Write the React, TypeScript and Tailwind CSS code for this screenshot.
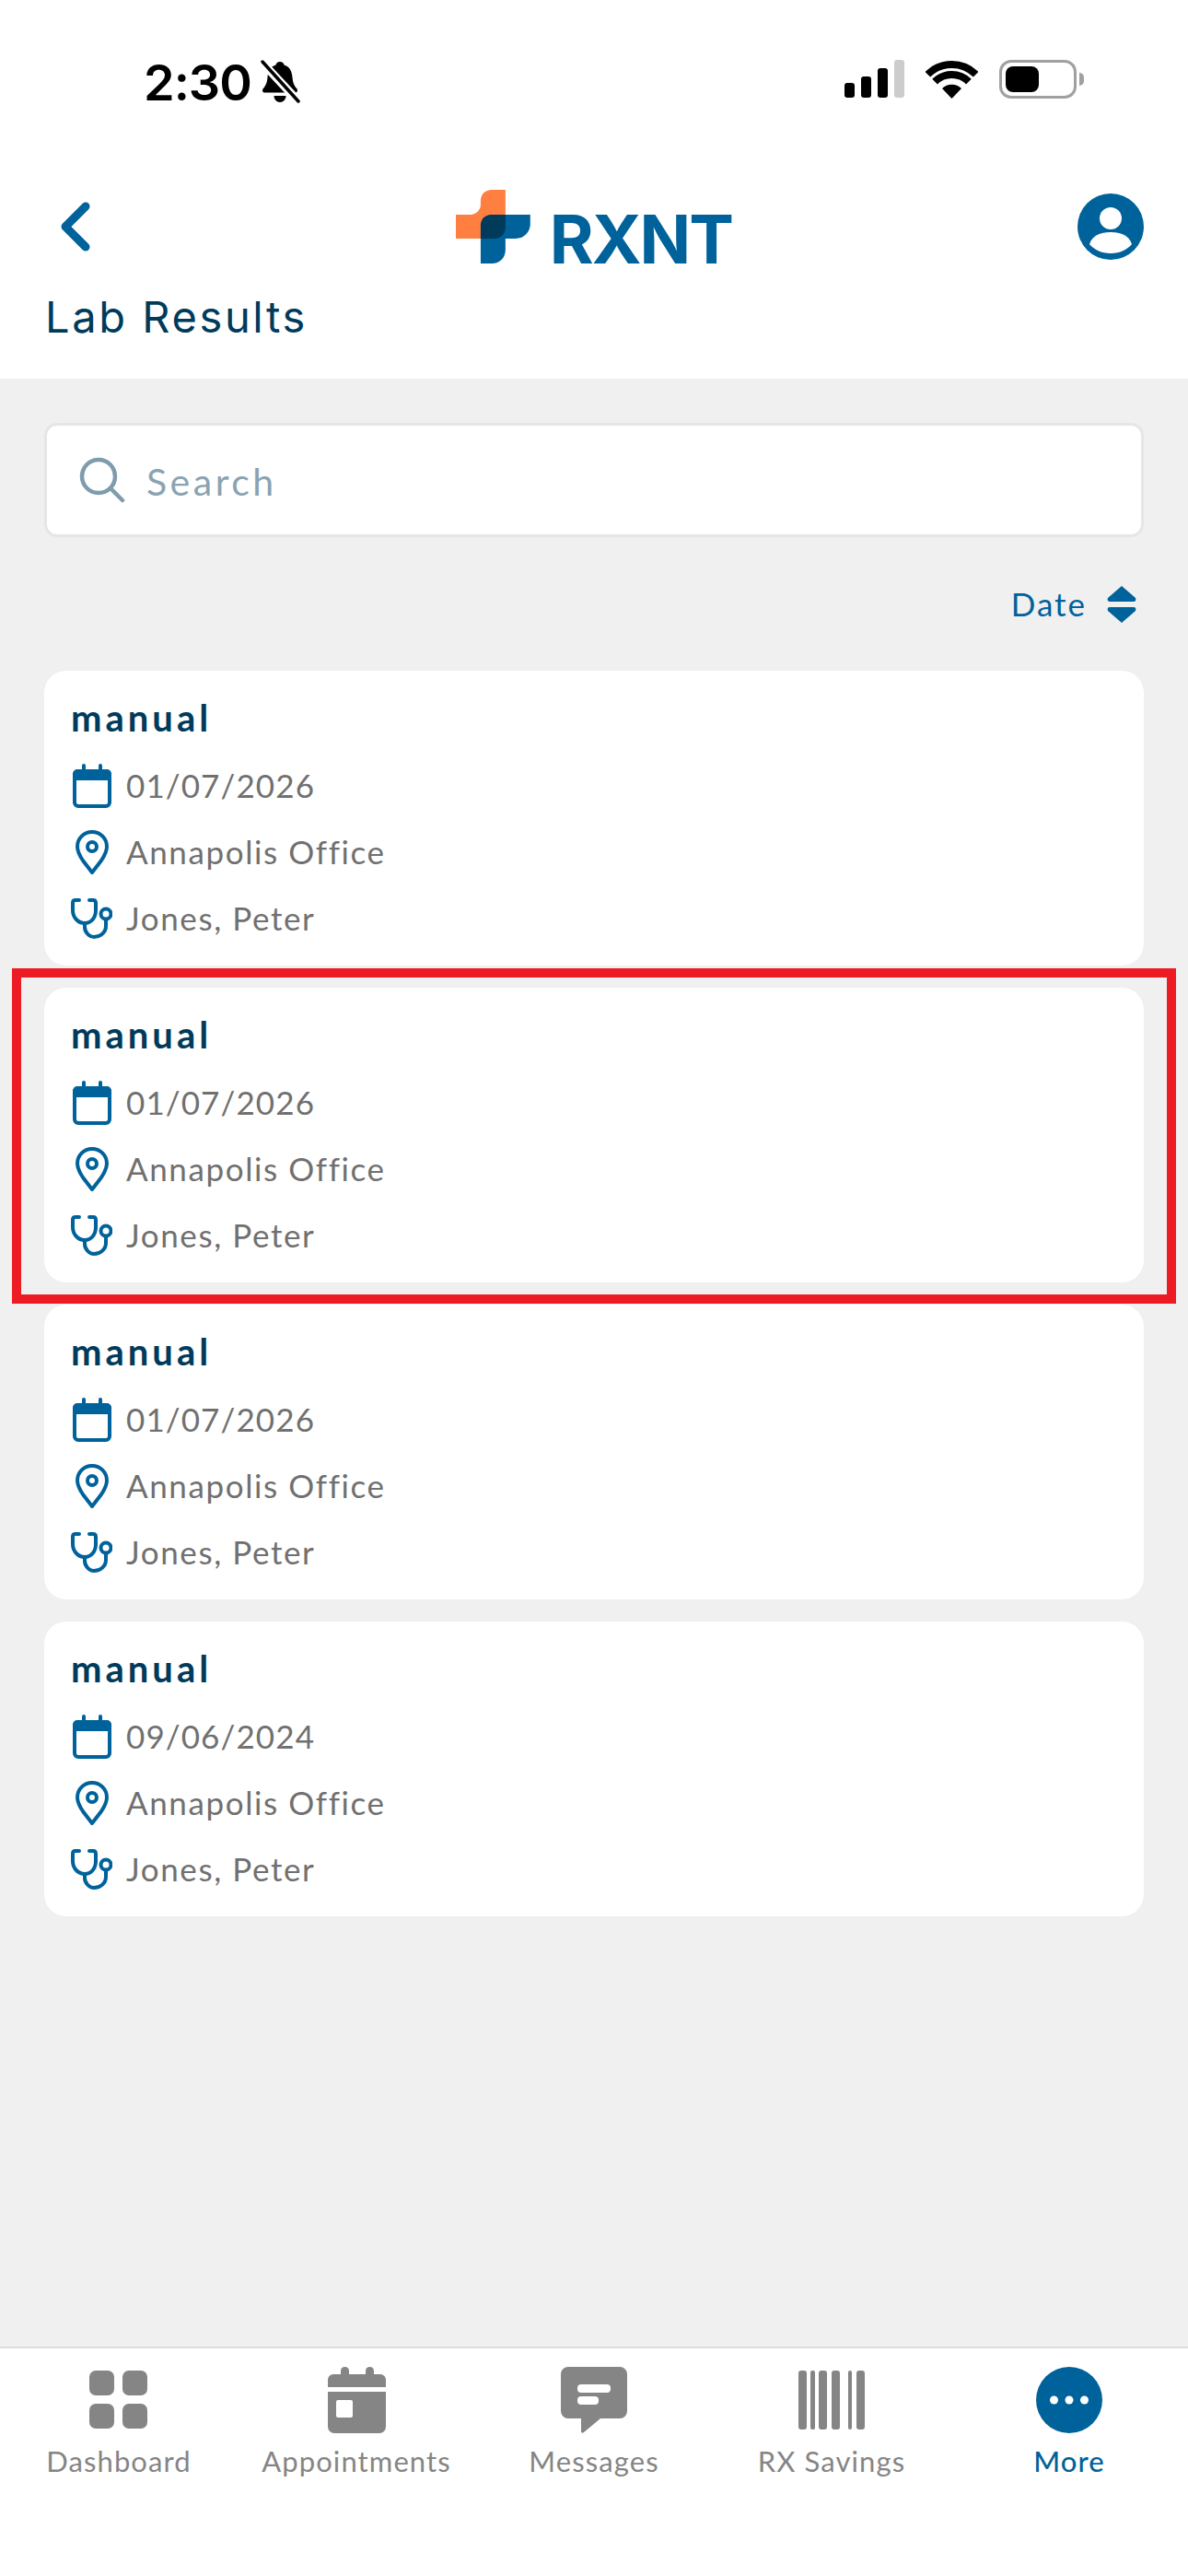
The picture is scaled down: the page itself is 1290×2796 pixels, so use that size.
const results = [
  { title: 'manual', date: '01/07/2026', office: 'Annapolis Office', doctor: 'Jones, Peter' },
  { title: 'manual', date: '01/07/2026', office: 'Annapolis Office', doctor: 'Jones, Peter' },
  { title: 'manual', date: '01/07/2026', office: 'Annapolis Office', doctor: 'Jones, Peter' },
  { title: 'manual', date: '09/06/2024', office: 'Annapolis Office', doctor: 'Jones, Peter' },
]

function BellSlash() {
  return (
    <svg width="44" height="48" viewBox="0 0 44 48" className="ml-[9px]">
      <path d="M22 2c2.500 0 4 1.500 4.500 3.500C33 7.500 35 13 35.500 19c.5 6 2 9 5 12.500 1 1.500.5 4-2 4H5.500c-2.500 0-3-2.500-2-4 3-3.500 4.500-6.500 5-12.500C9 13 11 7.500 17.500 5.500 18 3.500 19.500 2 22 2z" fill="#000" />
      <path d="M15.500 39h13c0 4-3 7-6.500 7s-6.500-3-6.500-7z" fill="#000" />
      <path d="M1 1l42 45" stroke="#fff" strokeWidth="9" />
      <path d="M3 2l39 43" stroke="#000" strokeWidth="3.500" strokeLinecap="round" />
    </svg>
  )
}

function StatusBar() {
  return (
    <div className="flex h-[206px] items-start justify-between pl-[156px] pr-[113px] pt-[65px]">
      <div className="flex items-center">
        <span className="text-[54px] leading-[47px] font-semibold text-black font-['Inter',sans-serif] tracking-[-1px]">2:30</span>
        <BellSlash />
      </div>
      <div className="flex items-start">
        <div className="flex h-[42px] items-end gap-[7px] pb-px">
          <div className="h-[16px] w-[11px] rounded-[3px] bg-black" />
          <div className="h-[23px] w-[11px] rounded-[3px] bg-black" />
          <div className="h-[32px] w-[11px] rounded-[3px] bg-black" />
          <div className="h-[41px] w-[11px] rounded-[3px] bg-[#cccccc]" />
        </div>
        <svg width="57" height="42" viewBox="0 0 57 42" className="ml-[23px]">
          <path d="M28.500 42L18 31a15 15 0 0 1 21 0z" fill="#000" />
          <path d="M10.100 23.600a26 26 0 0 1 36.800 0" fill="none" stroke="#000" strokeWidth="8" />
          <path d="M2.300 15.800a37 37 0 0 1 52.400 0" fill="none" stroke="#000" strokeWidth="8" />
        </svg>
        <div className="ml-[23px] flex items-center">
          <div className="flex h-[42px] w-[84px] items-center rounded-[13px] border-[3px] border-[#a0a0a0] p-[4px]">
            <div className="h-[28px] w-[36px] rounded-[8px] bg-black" />
          </div>
          <div className="ml-[3px] h-[14px] w-[5px] rounded-r-full bg-[#a0a0a0]" />
        </div>
      </div>
    </div>
  )
}

function Logo() {
  return (
    <div className="flex w-[300px] items-center">
      <svg width="81" height="80" viewBox="0 0 81 80">
        <path d="M0 27h16c6 0 11-5 11-11V12C27 5 32 0 39 0h15v53H0z" fill="#ff7f41" />
        <path d="M27 39c0-7 5-12 12-12h42v10c0 9-7 16-16 16H54v12c0 9-6 15-15 15H27z" fill="#00629b" />
        <path d="M27 39c0-7 5-12 12-12h15v14c0 7-5 12-12 12H27z" fill="#003b5c" />
      </svg>
      <span className="ml-[21px] self-end text-[73px] leading-[53px] font-bold text-[#00629b] font-['Inter',sans-serif] tracking-[-2px]">RXNT</span>
    </div>
  )
}

function Header() {
  return (
    <header className="h-[411px] bg-white">
      <StatusBar />
      <div className="flex h-[80px] items-center px-[48px]">
        <div className="flex flex-1">
          <svg width="32" height="54" viewBox="0 0 32 54" className="ml-[18px]">
            <path d="M27 5L5 27l22 22" fill="none" stroke="#00629b" strokeWidth="9" strokeLinecap="round" strokeLinejoin="round" />
          </svg>
        </div>
        <Logo />
        <div className="flex flex-1 justify-end">
          <svg width="72" height="72" viewBox="0 0 72 72">
            <circle cx="36" cy="36" r="36" fill="#00629b" />
            <circle cx="36" cy="27" r="12" fill="#fff" />
            <path d="M13 55c3-9 11-13 23-13s20 4 23 13c-5 6-13 10-23 10s-18-4-23-10z" fill="#fff" />
          </svg>
        </div>
      </div>
      <h1 className="ml-[49px] mt-[28px] text-[47px] leading-[60px] font-normal text-[#003b5c] font-['Inter',sans-serif] tracking-[2.600px]">Lab Results</h1>
    </header>
  )
}

function SearchBar() {
  return (
    <div className="mx-[48px] mt-[48px] flex h-[124px] items-center rounded-[14px] border-[3px] border-[#e6e6e6] bg-white pl-[35px]">
      <svg width="50" height="50" viewBox="0 0 50 50">
        <circle cx="21" cy="21" r="18" fill="none" stroke="#7f9cad" strokeWidth="4.500" />
        <path d="M34 34l13 13" stroke="#7f9cad" strokeWidth="4.500" strokeLinecap="round" />
      </svg>
      <span className="ml-[23px] pt-[3px] text-[41px] leading-none text-[#8aa3b2] font-['Lato',sans-serif] tracking-[3.500px]">Search</span>
    </div>
  )
}

function SortRow() {
  return (
    <div className="mx-[56px] mt-[52px] flex h-[42px] items-center justify-end">
      <span className="pb-[2px] text-[35px] leading-none text-[#00629b] font-['Lato',sans-serif] tracking-[2px]">Date</span>
      <svg width="32" height="42" viewBox="0 0 32 42" className="ml-[22px]">
        <path d="M16 1L31 14c1 2 0 4-2 4H3c-2 0-3-2-2-4z" fill="#00629b" />
        <path d="M16 41L31 28c1-2 0-4-2-4H3c-2 0-3 2-2 4z" fill="#00629b" />
      </svg>
    </div>
  )
}

function CalendarIcon() {
  return (
    <svg width="42" height="48" viewBox="0 0 42 48">
      <rect x="10" y="0" width="4" height="10" rx="2" fill="#00629b" />
      <rect x="28" y="0" width="4" height="10" rx="2" fill="#00629b" />
      <rect x="2" y="8" width="38" height="38" rx="4" fill="none" stroke="#00629b" strokeWidth="4" />
      <path d="M0 11a5 5 0 0 1 5-5h32a5 5 0 0 1 5 5v7H0z" fill="#00629b" />
    </svg>
  )
}

function PinIcon() {
  return (
    <svg width="36" height="48" viewBox="0 0 36 48">
      <path d="M18 2C9 2 2 9 2 18c0 5 2 9 6 15l10 13 10-13c4-6 6-10 6-15C34 9 27 2 18 2z" fill="none" stroke="#00629b" strokeWidth="4" strokeLinejoin="round" />
      <circle cx="18" cy="18" r="5" fill="none" stroke="#00629b" strokeWidth="4" />
    </svg>
  )
}

function StethoscopeIcon() {
  return (
    <svg width="45" height="44" viewBox="0 0 45 44" fill="none" stroke="#00629b" strokeWidth="4" strokeLinecap="round">
      <path d="M9 2H5Q2 2 2 5v8c0 8 6 14 13 14s12-6 12-14V5q0-3-3-3h-4" />
      <path d="M15 27v4c0 6 5 11 10 11 7 0 13-5 13-12v-7" />
      <circle cx="38" cy="17" r="5.500" />
    </svg>
  )
}

function ResultRow({ icon, text, tight }: { icon: React.ReactNode; text: string; tight?: boolean }) {
  return (
    <div className="flex h-[72px] items-center">
      <div className="flex w-[60px] justify-center pr-[15px]">{icon}</div>
      <span className={`pb-[2px] text-[35px] leading-none text-[#707070] font-['Lato',sans-serif] ${tight ? 'tracking-[1.100px]' : 'tracking-[1.600px]'}`}>{text}</span>
    </div>
  )
}

function ResultCard({ title, date, office, doctor }: (typeof results)[number]) {
  return (
    <div className="h-[320px] rounded-[24px] bg-white pl-[29px] pt-[16px]">
      <div className="flex h-[73px] items-center pb-[4px] text-[40px] leading-none font-bold text-[#003b5c] font-['Lato',sans-serif] tracking-[4px]">{title}</div>
      <ResultRow icon={<CalendarIcon />} text={date} tight />
      <ResultRow icon={<PinIcon />} text={office} />
      <ResultRow icon={<StethoscopeIcon />} text={doctor} />
    </div>
  )
}

function NavItem({ icon, label, active }: { icon: React.ReactNode; label: string; active?: boolean }) {
  return (
    <div className="flex flex-1 flex-col items-center">
      <div className="flex h-[72px] items-center justify-center">{icon}</div>
      <span className={`mt-[12px] text-[31px] leading-[36px] font-['Lato',sans-serif] tracking-[1.100px] ${active ? 'font-medium text-[#00629b]' : 'text-[#858585]'}`}>{label}</span>
    </div>
  )
}

function BottomNav() {
  return (
    <nav className="flex flex-1 items-start border-t-2 border-[#dddddd] bg-white pt-[20px]">
      <NavItem
        label="Dashboard"
        icon={
          <svg width="64" height="64" viewBox="0 0 64 64" fill="#858585">
            <rect x="0" y="0" width="27" height="27" rx="7" />
            <rect x="36" y="0" width="27" height="27" rx="7" />
            <rect x="0" y="36" width="27" height="27" rx="7" />
            <rect x="36" y="36" width="27" height="27" rx="7" />
          </svg>
        }
      />
      <NavItem
        label="Appointments"
        icon={
          <svg width="63" height="72" viewBox="0 0 63 72" fill="#858585">
            <rect x="14" y="0" width="9" height="12" rx="4.500" />
            <rect x="41" y="0" width="9" height="12" rx="4.500" />
            <path d="M0 14a6 6 0 0 1 6-6h51a6 6 0 0 1 6 6v8H0z" />
            <path fillRule="evenodd" d="M0 27h63v38a7 7 0 0 1-7 7H7a7 7 0 0 1-7-7zM11 36a2 2 0 0 0-2 2v15a2 2 0 0 0 2 2h14a2 2 0 0 0 2-2V38a2 2 0 0 0-2-2z" />
          </svg>
        }
      />
      <NavItem
        label="Messages"
        icon={
          <svg width="72" height="72" viewBox="0 0 72 72">
            <path d="M8 0h56a8 8 0 0 1 8 8v40a8 8 0 0 1-8 8H43L25 71c-1 1-3 1-3-1V56H8a8 8 0 0 1-8-8V8a8 8 0 0 1 8-8z" fill="#858585" />
            <rect x="18" y="19" width="36" height="9" rx="4" fill="#fff" />
            <rect x="18" y="32" width="23" height="9" rx="4" fill="#fff" />
          </svg>
        }
      />
      <NavItem
        label="RX Savings"
        icon={
          <svg width="72" height="64" viewBox="0 0 72 64" fill="#858585">
            <rect x="0" y="0" width="9" height="64" rx="3" />
            <rect x="13" y="0" width="5" height="64" rx="2" />
            <rect x="22" y="0" width="9" height="64" rx="3" />
            <rect x="36" y="0" width="9" height="64" rx="3" />
            <rect x="54" y="0" width="4" height="64" rx="2" />
            <rect x="63" y="0" width="9" height="64" rx="3" />
          </svg>
        }
      />
      <NavItem
        active
        label="More"
        icon={
          <svg width="72" height="72" viewBox="0 0 72 72">
            <circle cx="36" cy="36" r="36" fill="#00629b" />
            <circle cx="19.500" cy="36" r="4.500" fill="#fff" />
            <circle cx="36" cy="36" r="4.500" fill="#fff" />
            <circle cx="52.500" cy="36" r="4.500" fill="#fff" />
          </svg>
        }
      />
    </nav>
  )
}

export default function App() {
  return (
    <div className="relative flex h-[2796px] w-[1290px] flex-col overflow-hidden bg-[#f0f0f0]">
      <Header />
      <div className="flex h-[2136px] flex-col">
        <SearchBar />
        <SortRow />
        <div className="mx-[48px] mt-[51px] flex flex-col gap-[24px]">
          {results.map((r, i) => (
            <ResultCard key={i} {...r} />
          ))}
        </div>
      </div>
      <BottomNav />
      {/* highlight drawn over the second card */}
      <div className="absolute left-[13px] top-[1051px] h-[364px] w-[1264px] border-[10px] border-[#ed1c24]" />
    </div>
  )
}
